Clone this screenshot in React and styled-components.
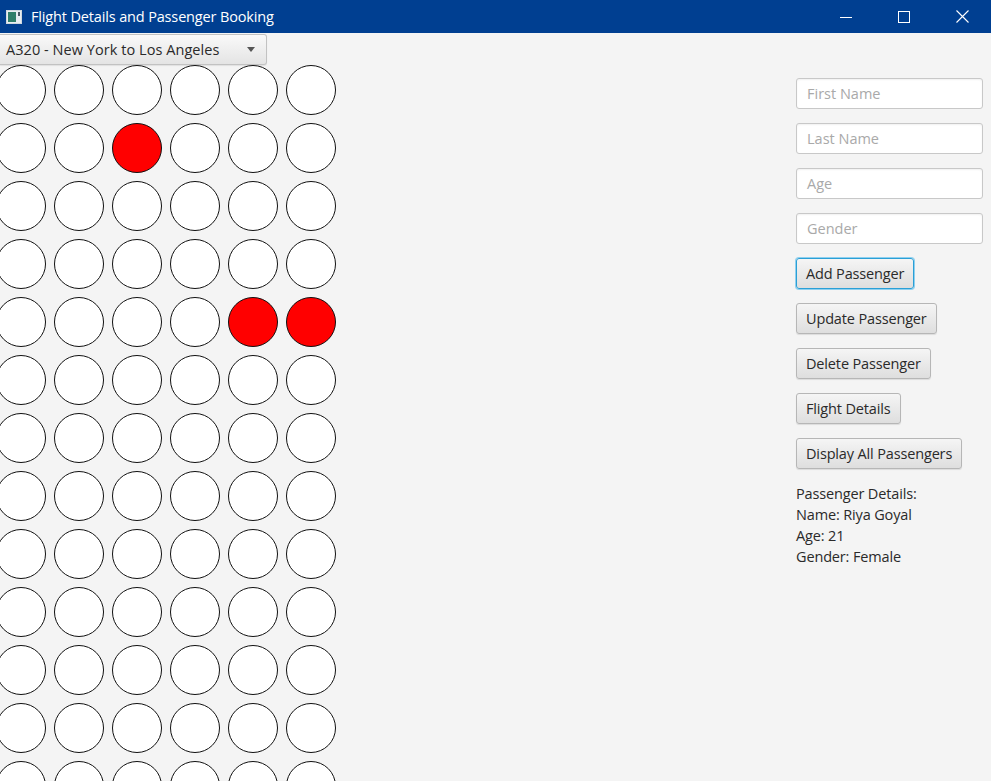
import React from "react";
import styled, { createGlobalStyle } from "styled-components";

const Global = createGlobalStyle`
  html, body { margin: 0; padding: 0; background: #f4f4f4; }
  body { font-family: "Open Sans", "Noto Sans", sans-serif; overflow: hidden; }
  * { box-sizing: border-box; }
`;

const Window = styled.div`
  width: 991px;
  height: 781px;
  display: flex;
  flex-direction: column;
  background: #f4f4f4;
  overflow: hidden;
`;

const TitleBar = styled.div`
  height: 33px;
  flex: none;
  background: #003f91;
  display: flex;
  align-items: center;
  color: #fff;
`;

const AppIcon = styled.svg`
  margin: 0 9px 0 6px;
  flex: none;
`;

const Title = styled.div`
  flex: 1;
  font-size: 14.5px;
  letter-spacing: -0.15px;
`;

const Ctl = styled.div`
  width: 58px;
  height: 33px;
  display: flex;
  align-items: center;
  justify-content: center;
`;

const Body = styled.div`
  flex: 1;
  display: flex;
  justify-content: space-between;
  min-height: 0;
`;

const Left = styled.div`
  display: flex;
  flex-direction: column;
  align-items: flex-start;
`;

const Combo = styled.div`
  flex: none;
  width: 267px;
  height: 31px;
  margin-top: 1px;
  border: 1px solid #c2c2c2;
  border-left: none;
  border-radius: 0 3px 3px 0;
  background: linear-gradient(#f9f9f9, #e4e4e4);
  display: flex;
  align-items: center;
  padding: 0 11px 0 6px;
  font-size: 14.5px;
  color: #2a2a2a;
  box-shadow: 0 1px 1px rgba(0, 0, 0, 0.08);
`;

const ComboText = styled.span`
  flex: 1;
  letter-spacing: 0.05px;
`;

const Arrow = styled.span`
  width: 0;
  height: 0;
  border-left: 4.5px solid transparent;
  border-right: 4.5px solid transparent;
  border-top: 5px solid #555;
`;

const SeatGrid = styled.div`
  flex: none;
  display: grid;
  grid-template-columns: repeat(6, 50px);
  grid-auto-rows: 50px;
  gap: 8px;
  margin-left: -4px;
`;

const Seat = styled.div`
  width: 50px;
  height: 50px;
  border-radius: 50%;
  border: 1.5px solid #111;
  background: ${(p) => (p.$taken ? "#ff0000" : "#ffffff")};
`;

const Right = styled.div`
  width: 195px;
  padding-top: 45px;
  display: flex;
  flex-direction: column;
  align-items: flex-start;
  gap: 14px;
`;

const Field = styled.div`
  flex: none;
  width: 187px;
  height: 31px;
  border: 1px solid #c8c8c8;
  border-radius: 3px;
  background: #fff;
  box-shadow: inset 0 1px 2px rgba(0, 0, 0, 0.06);
  display: flex;
  align-items: center;
  padding-left: 10px;
  font-size: 14.5px;
  color: #a9a9a9;
`;

const Button = styled.div`
  flex: none;
  height: 31px;
  padding: 0 9px;
  display: flex;
  align-items: center;
  border: 1px solid ${(p) => (p.$focused ? "#2a9fd6" : "#b6b6b6")};
  box-shadow: ${(p) => (p.$focused ? "0 0 0 1px #8fd0ef" : "0 1px 1px rgba(0,0,0,0.1)")};
  border-radius: 3px;
  background: linear-gradient(#f5f5f5, #dedede);
  font-size: 14.5px;
  color: #2a2a2a;
  letter-spacing: -0.15px;
`;

const Details = styled.div`
  margin-top: 0;
  font-size: 14.5px;
  line-height: 21px;
  color: #2a2a2a;
  letter-spacing: -0.15px;
`;

const taken = new Set(["1-2", "4-4", "4-5"]);

export default function App() {
  const rows = Array.from({ length: 13 });
  return (
    <>
      <Global />
      <Window>
        <TitleBar>
          <AppIcon width="16" height="14" viewBox="0 0 16 14">
            <rect x="0.5" y="0.5" width="15" height="13" fill="#e8eef2" stroke="#cfd8de" />
            <rect x="2" y="2" width="8" height="10" fill="#2f7f6a" />
            <rect x="12" y="2" width="2" height="4" fill="#4b5a66" />
          </AppIcon>
          <Title>Flight Details and Passenger Booking</Title>
          <Ctl>
            <svg width="12" height="12" viewBox="0 0 12 12">
              <line x1="0" y1="6.5" x2="12" y2="6.5" stroke="#fff" strokeWidth="1" />
            </svg>
          </Ctl>
          <Ctl>
            <svg width="12" height="12" viewBox="0 0 12 12">
              <rect x="0.5" y="0.5" width="11" height="11" fill="none" stroke="#fff" strokeWidth="1" />
            </svg>
          </Ctl>
          <Ctl>
            <svg width="13" height="13" viewBox="0 0 13 13">
              <path d="M0.5 0.5 L12.5 12.5 M12.5 0.5 L0.5 12.5" stroke="#fff" strokeWidth="1.1" />
            </svg>
          </Ctl>
        </TitleBar>
        <Body>
          <Left>
            <Combo>
              <ComboText>A320 - New York to Los Angeles</ComboText>
              <Arrow />
            </Combo>
            <SeatGrid>
              {rows.map((_, r) =>
                Array.from({ length: 6 }).map((__, c) => (
                  <Seat key={`${r}-${c}`} $taken={taken.has(`${r}-${c}`)} />
                ))
              )}
            </SeatGrid>
          </Left>
          <Right>
            <Field>First Name</Field>
            <Field>Last Name</Field>
            <Field>Age</Field>
            <Field>Gender</Field>
            <Button $focused>Add Passenger</Button>
            <Button>Update Passenger</Button>
            <Button>Delete Passenger</Button>
            <Button>Flight Details</Button>
            <Button>Display All Passengers</Button>
            <Details>
              Passenger Details:
              <br />
              Name: Riya Goyal
              <br />
              Age: 21
              <br />
              Gender: Female
            </Details>
          </Right>
        </Body>
      </Window>
    </>
  );
}
